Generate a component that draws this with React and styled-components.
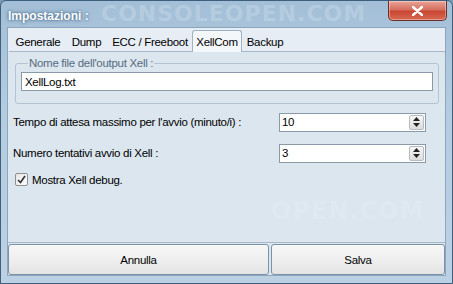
import React from "react";
import styled, { createGlobalStyle } from "styled-components";

const GlobalStyle = createGlobalStyle`
  html, body {
    margin: 0;
    padding: 0;
    background: #7b9ab5;
  }
  * {
    box-sizing: border-box;
  }
`;

const Window = styled.div`
  position: relative;
  width: 453px;
  height: 284px;
  display: flex;
  flex-direction: column;
  background: linear-gradient(180deg, #a3bfd7 0%, #b4cce0 40%, #bcd2e4 100%);
  border: 1px solid #3f5f7d;
  border-radius: 6px 6px 0 0;
  overflow: hidden;
  font-family: "Liberation Sans", Arial, sans-serif;
  font-size: 11.5px;
  letter-spacing: -0.3px;
  color: #000;
`;

const TitleBar = styled.div`
  height: 26px;
  display: flex;
  align-items: flex-start;
  justify-content: space-between;
  flex-shrink: 0;
`;

const Title = styled.div`
  position: relative;
  z-index: 2;
  padding: 8px 0 0 7px;
  font-weight: bold;
  font-size: 12px;
  letter-spacing: 0;
  color: #fff;
  text-shadow: 0 0 4px #4b6c8c, 0 0 2px #4b6c8c;
`;

const CloseButton = styled.div`
  width: 59px;
  height: 20px;
  margin-right: 5px;
  display: flex;
  align-items: center;
  justify-content: center;
  background: linear-gradient(180deg, #e9a598 0%, #d6705f 45%, #c94632 55%, #d76a52 100%);
  border: 1px solid #6e2e25;
  border-top: none;
  border-radius: 0 0 5px 5px;
  box-shadow: inset 0 0 0 1px rgba(255, 255, 255, 0.35);
`;

const Client = styled.div`
  flex: 1;
  margin: 0 6px 7px 6px;
  display: flex;
  flex-direction: column;
  background: #dfe8f1;
  border: 1px solid #8ea6bd;
`;

const TabStrip = styled.div`
  height: 23px;
  display: flex;
  align-items: flex-end;
  padding-left: 2px;
  background: #e6edf4;
`;

const Tab = styled.div`
  width: ${(p) => p.w}px;
  height: ${(p) => (p.active ? "22px" : "20px")};
  margin: 0 ${(p) => (p.active ? "-1px" : "0")};
  display: flex;
  align-items: center;
  justify-content: center;
  border: 1px solid ${(p) => (p.active ? "#9fb2c4" : "transparent")};
  border-bottom: none;
  border-radius: 3px 3px 0 0;
  background: ${(p) => (p.active ? "#f4f7fa" : "transparent")};
  position: relative;
  z-index: ${(p) => (p.active ? 1 : 0)};
  margin-bottom: ${(p) => (p.active ? "-1px" : "0")};
`;

const Panel = styled.div`
  flex: 1;
  margin: 0 0 1px 1px;
  padding: 5px 6px 0 6px;
  border-top: 1px solid #a6b7c7;
  background: #dbe6ef;
  display: flex;
  flex-direction: column;
`;

const GroupBox = styled.fieldset`
  margin: 0;
  padding: 3px 5px 8px 5px;
  border: 1px solid #b3c3d1;
  border-radius: 3px;
  height: 47px;
`;

const Legend = styled.legend`
  padding: 0 1px;
  margin-left: 7px;
  color: #566b7f;
`;

const TextInput = styled.div`
  height: 19px;
  padding: 0 3px;
  display: flex;
  align-items: center;
  background: #fff;
  border: 1px solid #8a9aa9;
`;

const FieldRow = styled.div`
  display: flex;
  align-items: center;
  justify-content: space-between;
  height: 20px;
  margin-top: ${(p) => p.gap}px;
  margin-left: -2px;
`;

const SpinBox = styled.div`
  width: 147px;
  height: 19px;
  margin-right: 13px;
  display: flex;
  background: #fff;
  border: 1px solid #8a9aa9;
`;

const SpinValue = styled.div`
  flex: 1;
  padding: 0 2px;
  display: flex;
  align-items: center;
`;

const SpinButtons = styled.div`
  width: 15px;
  margin: 1px;
  display: flex;
  flex-direction: column;
  border: 1px solid #b4bcc4;
  border-radius: 2px;
  background: linear-gradient(180deg, #f6f6f6, #dcdcdc);
`;

const SpinArrow = styled.div`
  flex: 1;
  display: flex;
  align-items: center;
  justify-content: center;
`;

const CheckRow = styled.label`
  display: flex;
  align-items: center;
  gap: 4px;
  margin-top: 10px;
`;

const CheckBox = styled.span`
  width: 13px;
  height: 13px;
  display: flex;
  align-items: center;
  justify-content: center;
  border: 1px solid #8f8f8f;
  border-radius: 2px;
  background: linear-gradient(135deg, #e6e6e6, #fcfcfc);
`;

const Footer = styled.div`
  height: 33px;
  display: flex;
  gap: 2px;
  background: #dbe6ef;
  border-top: 1px solid #a6b7c7;
  padding-top: 1px;
`;

const Button = styled.div`
  flex: ${(p) => p.grow};
  display: flex;
  align-items: center;
  justify-content: center;
  background: linear-gradient(180deg, #f7f7f7 0%, #efefef 50%, #e3e3e3 100%);
  border: 1px solid #7c92a7;
  border-radius: 3px;
`;

const Watermark = styled.div`
  position: absolute;
  left: ${(p) => p.x}px;
  top: ${(p) => p.y}px;
  font-family: "DejaVu Sans", Verdana, sans-serif;
  font-weight: bold;
  font-size: ${(p) => p.size}px;
  letter-spacing: 1px;
  color: rgba(255, 255, 255, ${(p) => p.alpha});
  white-space: nowrap;
  pointer-events: none;
`;

const Arrow = ({ up }) => (
  <svg width="7" height="4" viewBox="0 0 7 4">
    <path d={up ? "M0 4 L3.5 0 L7 4 Z" : "M0 0 L3.5 4 L7 0 Z"} fill="#222" />
  </svg>
);

const Spin = ({ value }) => (
  <SpinBox>
    <SpinValue>{value}</SpinValue>
    <SpinButtons>
      <SpinArrow>
        <Arrow up />
      </SpinArrow>
      <SpinArrow>
        <Arrow />
      </SpinArrow>
    </SpinButtons>
  </SpinBox>
);

const tabs = [
  { label: "Generale", w: 56 },
  { label: "Dump", w: 41 },
  { label: "ECC / Freeboot", w: 86 },
  { label: "XellCom", w: 50 },
  { label: "Backup", w: 48 },
];

export default function App() {
  return (
    <>
      <GlobalStyle />
      <Window>
        <Watermark x={100} y={0} size={22} alpha={0.2}>
          CONSOLEOPEN.COM
        </Watermark>
        <Watermark x={270} y={196} size={24} alpha={0.12}>
          OPEN.COM
        </Watermark>
        <TitleBar>
          <Title>Impostazioni :</Title>
          <CloseButton>
            <svg width="11" height="10" viewBox="0 0 11 10">
              <path
                d="M1 1 L10 9 M10 1 L1 9"
                stroke="#fff"
                strokeWidth="2.4"
                strokeLinecap="round"
              />
            </svg>
          </CloseButton>
        </TitleBar>
        <Client>
          <TabStrip>
            {tabs.map((t) => (
              <Tab key={t.label} w={t.w} active={t.label === "XellCom"}>
                {t.label}
              </Tab>
            ))}
          </TabStrip>
          <Panel>
            <GroupBox>
              <Legend>Nome file dell'output Xell :</Legend>
              <TextInput>XellLog.txt</TextInput>
            </GroupBox>
            <FieldRow gap={8}>
              <span>Tempo di attesa massimo per l'avvio (minuto/i) :</span>
              <Spin value="10" />
            </FieldRow>
            <FieldRow gap={11}>
              <span>Numero tentativi avvio di Xell :</span>
              <Spin value="3" />
            </FieldRow>
            <CheckRow>
              <CheckBox>
                <svg width="9" height="9" viewBox="0 0 9 9">
                  <path
                    d="M1 5 L3.5 7.5 L8 1"
                    stroke="#333"
                    strokeWidth="1.6"
                    fill="none"
                  />
                </svg>
              </CheckBox>
              Mostra Xell debug.
            </CheckRow>
          </Panel>
          <Footer>
            <Button grow={262}>Annulla</Button>
            <Button grow={174}>Salva</Button>
          </Footer>
        </Client>
      </Window>
    </>
  );
}
